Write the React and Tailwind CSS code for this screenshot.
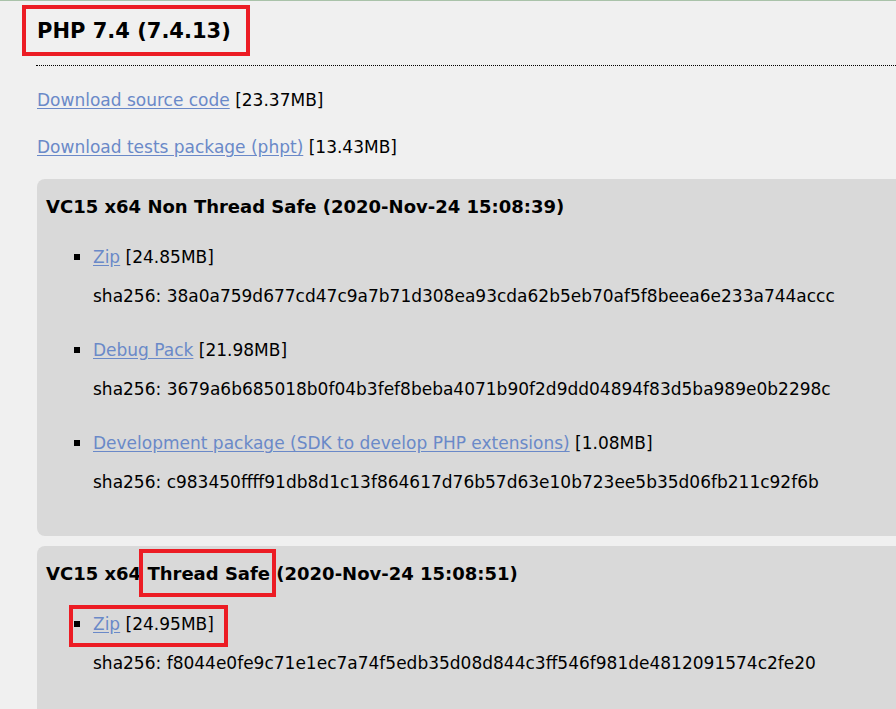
import React from 'react'

const builds = [
  {
    title: ['VC15 x64 Non Thread Safe', '(2020-Nov-24 15:08:39)'],
    files: [
      { name: 'Zip', size: '24.85MB', sha: '38a0a759d677cd47c9a7b71d308ea93cda62b5eb70af5f8beea6e233a744accc' },
      { name: 'Debug Pack', size: '21.98MB', sha: '3679a6b685018b0f04b3fef8beba4071b90f2d9dd04894f83d5ba989e0b2298c' },
      {
        name: 'Development package (SDK to develop PHP extensions)',
        size: '1.08MB',
        sha: 'c983450ffff91db8d1c13f864617d76b57d63e10b723ee5b35d06fb211c92f6b',
      },
    ],
  },
  {
    title: ['VC15 x64 Thread Safe', '(2020-Nov-24 15:08:51)'],
    marked: true,
    files: [
      { name: 'Zip', size: '24.95MB', sha: 'f8044e0fe9c71e1ec7a74f5edb35d08d844c3ff546f981de4812091574c2fe20', marked: true },
      { name: 'Debug Pack', size: '21.97MB', sha: '9a3f0b7c52d1e08f6a4b2c9d7e15f3a8b06c4d2e9f71a5b3c8d0e6f2a4b19c7d' },
    ],
  },
]

function Mark({ className }) {
  return <span className={'pointer-events-none absolute border-[4px] border-[#ec1c24] ' + className} />
}

function Link({ children }) {
  return <a href="#" className="text-[#6a89c8] underline decoration-[#6a89c8] underline-offset-[2px]">{children}</a>
}

function FileRow({ file, first }) {
  return (
    <div className={first ? 'mt-[26px]' : 'mt-[30px]'}>
      <div className="ml-[28px] flex h-[24px] items-center">
        <span className="relative flex items-center gap-[13px]">
          <span className="h-[6px] w-[6px] bg-black" />
          <span>
            <Link>{file.name}</Link> [{file.size}]
          </span>
          {file.marked && <Mark className="-left-[5px] -right-[14px] -top-[7px] -bottom-[11px]" />}
        </span>
      </div>
      <div className="ml-[47px] mt-[15px] h-[24px] leading-[24px]">sha256: {file.sha}</div>
    </div>
  )
}

export default function App() {
  return (
    <div className="min-h-screen overflow-hidden border-t border-[#a9c2a9] bg-[#f0f0f0] pb-10 font-['DejaVu_Sans',sans-serif] text-[17px] leading-[24px] text-black">
      <h1 className="ml-[37px] mt-[15px] h-[30px] text-[21px] font-bold leading-[30px]">
        <span className="relative inline-block">
          PHP 7.4 (7.4.13)
          <Mark className="-left-[15px] -right-[19px] -top-[11px] -bottom-[10px]" />
        </span>
      </h1>
      <div className="ml-[36px] mt-[19px] border-t border-dotted border-black" />

      <p className="ml-[37px] mt-[22px] h-[24px]">
        <Link>Download source code</Link> [23.37MB]
      </p>
      <p className="ml-[37px] mt-[23px] h-[24px]">
        <Link>Download tests package (phpt)</Link> [13.43MB]
      </p>

      {builds.map((build, i) => (
        <section
          key={build.title[1]}
          className={[
            'ml-[37px] -mr-[40px] rounded-[8px] bg-[#d9d9d9] px-[9px] pb-[42px] pt-[16px]',
            i === 0 ? 'mt-[20px]' : 'mt-[10px]',
          ].join(' ')}
        >
          <h3 className="h-[24px] text-[18px] font-bold leading-[24px]">
            {build.marked ? (
              <>
                VC15 x64{' '}
                <span className="relative">
                  Thread Safe
                  <Mark className="-left-[8px] -right-[6px] -top-[14px] -bottom-[13px]" />
                </span>{' '}
                {build.title[1]}
              </>
            ) : (
              build.title.join(' ')
            )}
          </h3>
          {build.files.map((file, j) => (
            <FileRow key={file.sha} file={file} first={j === 0} />
          ))}
        </section>
      ))}
    </div>
  )
}
